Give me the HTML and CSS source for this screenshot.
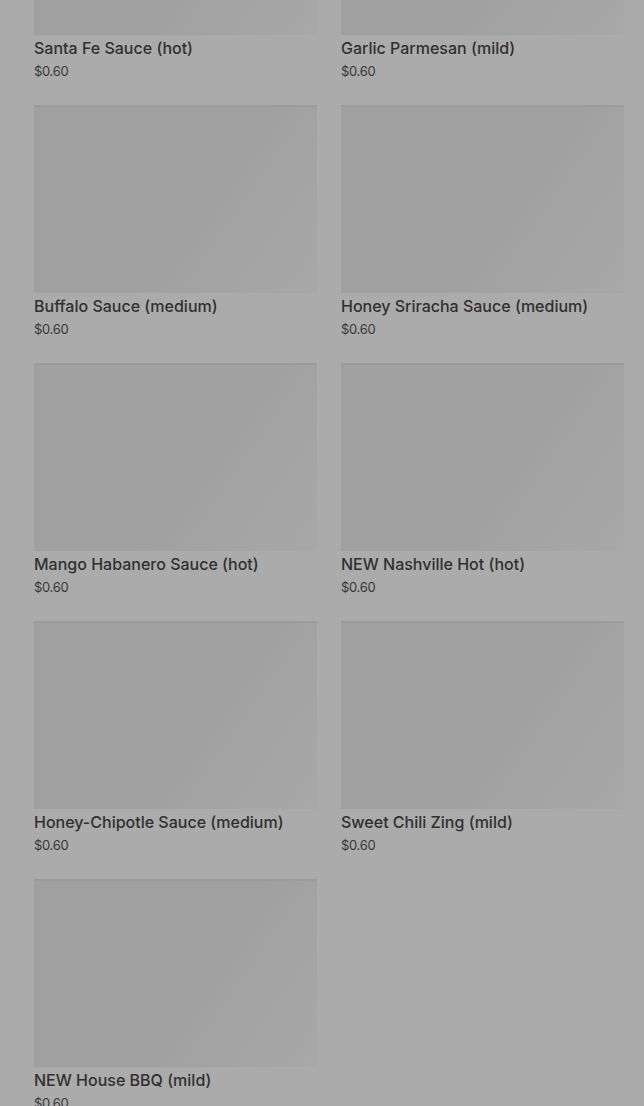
FILE: index.html
```html
<!DOCTYPE html>
<html lang="en">
<head>
    <meta charset="UTF-8">
    <meta name="viewport" content="width=device-width, initial-scale=1.0">
    <title>Sauces</title>
    <link rel="stylesheet" href="styles.css">
</head>
<body>

    <div class="menu">
        <!-- Sauces -->
        <div class="card">
            <div class="thumb"></div>
            <div class="name">Santa Fe Sauce (hot)</div>
            <div class="price">$0.60</div>
        </div>
        <div class="card">
            <div class="thumb"></div>
            <div class="name">Garlic Parmesan (mild)</div>
            <div class="price">$0.60</div>
        </div>
        <div class="card">
            <div class="thumb"></div>
            <div class="name">Buffalo Sauce (medium)</div>
            <div class="price">$0.60</div>
        </div>
        <div class="card">
            <div class="thumb"></div>
            <div class="name">Honey Sriracha Sauce (medium)</div>
            <div class="price">$0.60</div>
        </div>
        <div class="card">
            <div class="thumb"></div>
            <div class="name">Mango Habanero Sauce (hot)</div>
            <div class="price">$0.60</div>
        </div>
        <div class="card">
            <div class="thumb"></div>
            <div class="name">NEW Nashville Hot (hot)</div>
            <div class="price">$0.60</div>
        </div>
        <div class="card">
            <div class="thumb"></div>
            <div class="name">Honey-Chipotle Sauce (medium)</div>
            <div class="price">$0.60</div>
        </div>
        <div class="card">
            <div class="thumb"></div>
            <div class="name">Sweet Chili Zing (mild)</div>
            <div class="price">$0.60</div>
        </div>
        <div class="card">
            <div class="thumb"></div>
            <div class="name">NEW House BBQ (mild)</div>
            <div class="price">$0.60</div>
        </div>
    </div>

</body>
</html>
```

FILE: styles.css
```css
body {
    font-family: Inter, "Noto Sans", sans-serif;
    background-color: #ababab;
    margin: 0;
    padding: 0;
    overflow: hidden;
}
.menu {
    display: grid;
    grid-template-columns: 283px 283px;
    column-gap: 24px;
    row-gap: 25px;
    padding: 0 20px 40px 34px;
    margin-top: -153px;
}
.thumb {
    height: 188px;
    background: linear-gradient(125deg, #a0a0a0 55%, #a8a8a8 100%);
    box-shadow: inset 0 2px 0 rgba(0,0,0,0.03);
}
.name {
    margin-top: 3px;
    font-size: 16px;
    line-height: 20px;
    font-weight: 500;
    color: #303030;
}
.price {
    margin-top: 4px;
    font-size: 13px;
    line-height: 18px;
    letter-spacing: -0.3px;
    color: #383838;
}
```
